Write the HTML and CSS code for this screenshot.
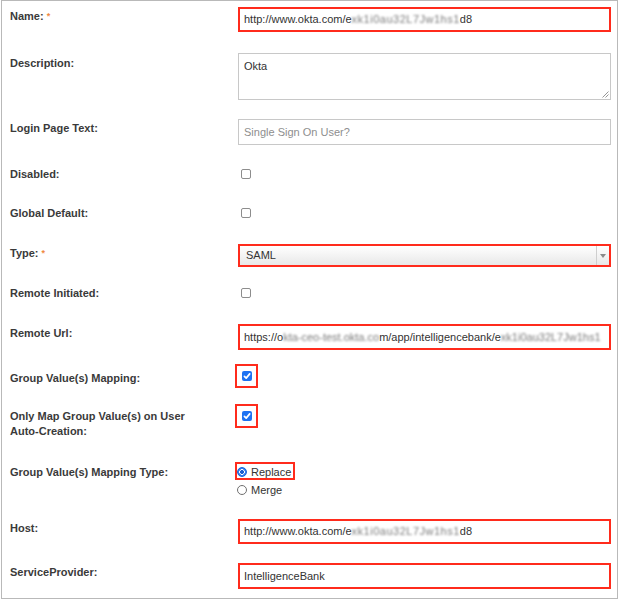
FILE: index.html
```html
<!DOCTYPE html>
<html>
<head>
<meta charset="utf-8">
<link rel="stylesheet" href="styles.css">
</head>
<body>
<div class="frame">
  <div class="row row-name">
    <div class="lbl pad2">Name: <span class="req">*</span></div>
    <div class="field hl">http://www.okta.com/e<span class="redact wide">xk1i0au32L7Jw1hs1</span>d8</div>
  </div>
  <div class="row row-desc">
    <div class="lbl pad3">Description:</div>
    <div class="area">Okta
      <svg class="grip" width="7" height="7" viewBox="0 0 7 7"><path d="M0.5 6.5 L6.5 0.5 M3.5 6.5 L6.5 3.5" stroke="#8a8a8a" stroke-width="0.9" fill="none"/></svg>
    </div>
  </div>
  <div class="row row-login">
    <div class="lbl pad2">Login Page Text:</div>
    <div class="field tall ph">Single Sign On User?</div>
  </div>
  <div class="row row-dis">
    <div class="lbl">Disabled:</div>
    <span class="cb"></span>
  </div>
  <div class="row row-glob">
    <div class="lbl">Global Default:</div>
    <span class="cb"></span>
  </div>
  <div class="row row-type">
    <div class="lbl pad2">Type: <span class="req">*</span></div>
    <div class="select">
      <span class="sel-text">SAML</span>
      <span class="sel-arrow"><span class="tri"></span></span>
    </div>
  </div>
  <div class="row row-rinit">
    <div class="lbl">Remote Initiated:</div>
    <span class="cb"></span>
  </div>
  <div class="row row-rurl">
    <div class="lbl pad2">Remote Url:</div>
    <div class="field hl tall">https://o<span class="redact">kta-ceo-test.okta.co</span>m/app/intelligencebank/e<span class="redact">xk1i0au32L7Jw1hs1</span></div>
  </div>
  <div class="row row-gmap">
    <div class="lbl pad7">Group Value(s) Mapping:</div>
    <div class="cb-box"><span class="cb on"><svg width="10" height="10" viewBox="0 0 10 10"><path d="M2.4 5.3 L4.2 7.1 L7.7 2.9" stroke="#fff" stroke-width="1.7" fill="none" stroke-linecap="round" stroke-linejoin="round"/></svg></span></div>
  </div>
  <div class="row row-only">
    <div class="lbl pad5">Only Map Group Value(s) on User Auto-Creation:</div>
    <div class="cb-box"><span class="cb on"><svg width="10" height="10" viewBox="0 0 10 10"><path d="M2.4 5.3 L4.2 7.1 L7.7 2.9" stroke="#fff" stroke-width="1.7" fill="none" stroke-linecap="round" stroke-linejoin="round"/></svg></span></div>
  </div>
  <div class="row row-mtype">
    <div class="lbl pad3">Group Value(s) Mapping Type:</div>
    <div class="radios">
      <div class="radio-hl"><span class="rd on"></span><span class="rd-text">Replace</span></div>
      <div class="radio-plain"><span class="rd"></span><span class="rd-text">Merge</span></div>
    </div>
  </div>
  <div class="row row-host">
    <div class="lbl pad2">Host:</div>
    <div class="field hl">http://www.okta.com/e<span class="redact wide">xk1i0au32L7Jw1hs1</span>d8</div>
  </div>
  <div class="row row-sp">
    <div class="lbl pad2">ServiceProvider:</div>
    <div class="field hl tall">IntelligenceBank</div>
  </div>
</div>
</body>
</html>
```
FILE: styles.css
```css
html, body {
  margin: 0;
  padding: 0;
  background: #fff;
}
body {
  font-family: "Liberation Sans", Arial, Helvetica, sans-serif;
  color: #333;
}
.frame {
  box-sizing: border-box;
  margin-left: 1px;
  width: 617px;
  height: 599px;
  border: 1px solid #b9b9b9;
  padding: 6px 0 0 8px;
  overflow: hidden;
}
.row {
  display: grid;
  grid-template-columns: 228px 373px;
  align-items: start;
}
.row-name { height: 46px; }
.row-desc { height: 66px; }
.row-login { height: 48px; }
.row-dis { height: 39px; }
.row-glob { height: 38px; }
.row-type { height: 42px; }
.row-rinit { height: 38px; }
.row-rurl { height: 40px; }
.row-gmap { height: 40px; }
.row-only { height: 58px; }
.row-mtype { height: 57px; }
.row-host { height: 44px; }
.row-sp { height: 30px; }

.lbl {
  font-weight: bold;
  font-size: 11px;
  line-height: 15px;
  color: #3a3a3a;
  max-width: 200px;
}
.pad2 { padding-top: 2px; }
.pad3 { padding-top: 3px; }
.pad5 { padding-top: 5px; }
.pad7 { padding-top: 7px; }
.req {
  color: #f0893f;
  font-size: 9px;
  font-weight: bold;
  vertical-align: 1px;
}

.field {
  box-sizing: border-box;
  height: 25px;
  border: 1px solid #c8c8c8;
  padding: 0 5px;
  font-size: 11px;
  line-height: 23px;
  color: #333;
  white-space: nowrap;
  overflow: hidden;
}
.field.tall { height: 26px; line-height: 24px; }
.field.hl {
  border: 2px solid #ff2b1c;
  padding: 0 4px;
  line-height: 21px;
}
.field.hl.tall { line-height: 22px; }
.ph { color: #8e8e8e; }
.redact {
  filter: blur(1.2px);
  color: #7a7a7a;
}
.redact.wide { letter-spacing: 0.5px; }

.area {
  position: relative;
  box-sizing: border-box;
  height: 47px;
  border: 1px solid #c8c8c8;
  padding: 5px 5px 0;
  font-size: 11px;
  line-height: 15px;
  color: #333;
}
.grip {
  position: absolute;
  right: 1px;
  bottom: 1px;
}

.cb {
  display: block;
  box-sizing: border-box;
  width: 10px;
  height: 10px;
  margin: 2px 0 0 3px;
  border: 1px solid #8d8d8d;
  border-radius: 2px;
  background: #fff;
}
.cb.on {
  margin: 0;
  border: none;
  background: #1d72f2;
  overflow: hidden;
}
.cb.on svg { display: block; }
.cb-box {
  box-sizing: border-box;
  width: 23px;
  height: 24px;
  margin-left: -3px;
  border: 2px solid #ff2b1c;
  display: flex;
  align-items: center;
  justify-content: center;
}

.select {
  box-sizing: border-box;
  height: 23px;
  border: 2px solid #ff2b1c;
  background: linear-gradient(#ffffff, #e8e8e8);
  display: flex;
  align-items: stretch;
}
.sel-text {
  flex: 1;
  padding-left: 6px;
  font-size: 11px;
  line-height: 19px;
  color: #333;
}
.sel-arrow {
  width: 12px;
  border-left: 1px solid #cfcfcf;
  display: flex;
  align-items: center;
  justify-content: center;
}
.tri {
  width: 0;
  height: 0;
  border-left: 3px solid transparent;
  border-right: 3px solid transparent;
  border-top: 4px solid #8a8a8a;
}

.radios {
  display: flex;
  flex-direction: column;
  align-items: flex-start;
}
.radio-hl {
  box-sizing: border-box;
  height: 18px;
  margin-left: -3px;
  padding-right: 2px;
  border: 2px solid #ff2b1c;
  display: flex;
  align-items: flex-start;
}
.radio-plain {
  margin-left: -1px;
  margin-top: 3px;
  display: flex;
  align-items: flex-start;
}
.rd {
  box-sizing: border-box;
  width: 10px;
  height: 10px;
  margin-top: 2px;
  border: 1px solid #6f6f6f;
  border-radius: 50%;
  background: #fff;
}
.radio-hl .rd { margin-top: 3px; }
.rd.on {
  border: 1px solid #1a62d6;
  background: radial-gradient(circle, #1a5fd0 0 1.8px, #ffffff 2.2px 2.6px, #2f7ff0 3px);
}
.rd-text {
  margin-left: 4px;
  font-size: 11px;
  line-height: 15px;
  color: #333;
}
.radio-hl .rd-text { margin-top: 1px; }
```
